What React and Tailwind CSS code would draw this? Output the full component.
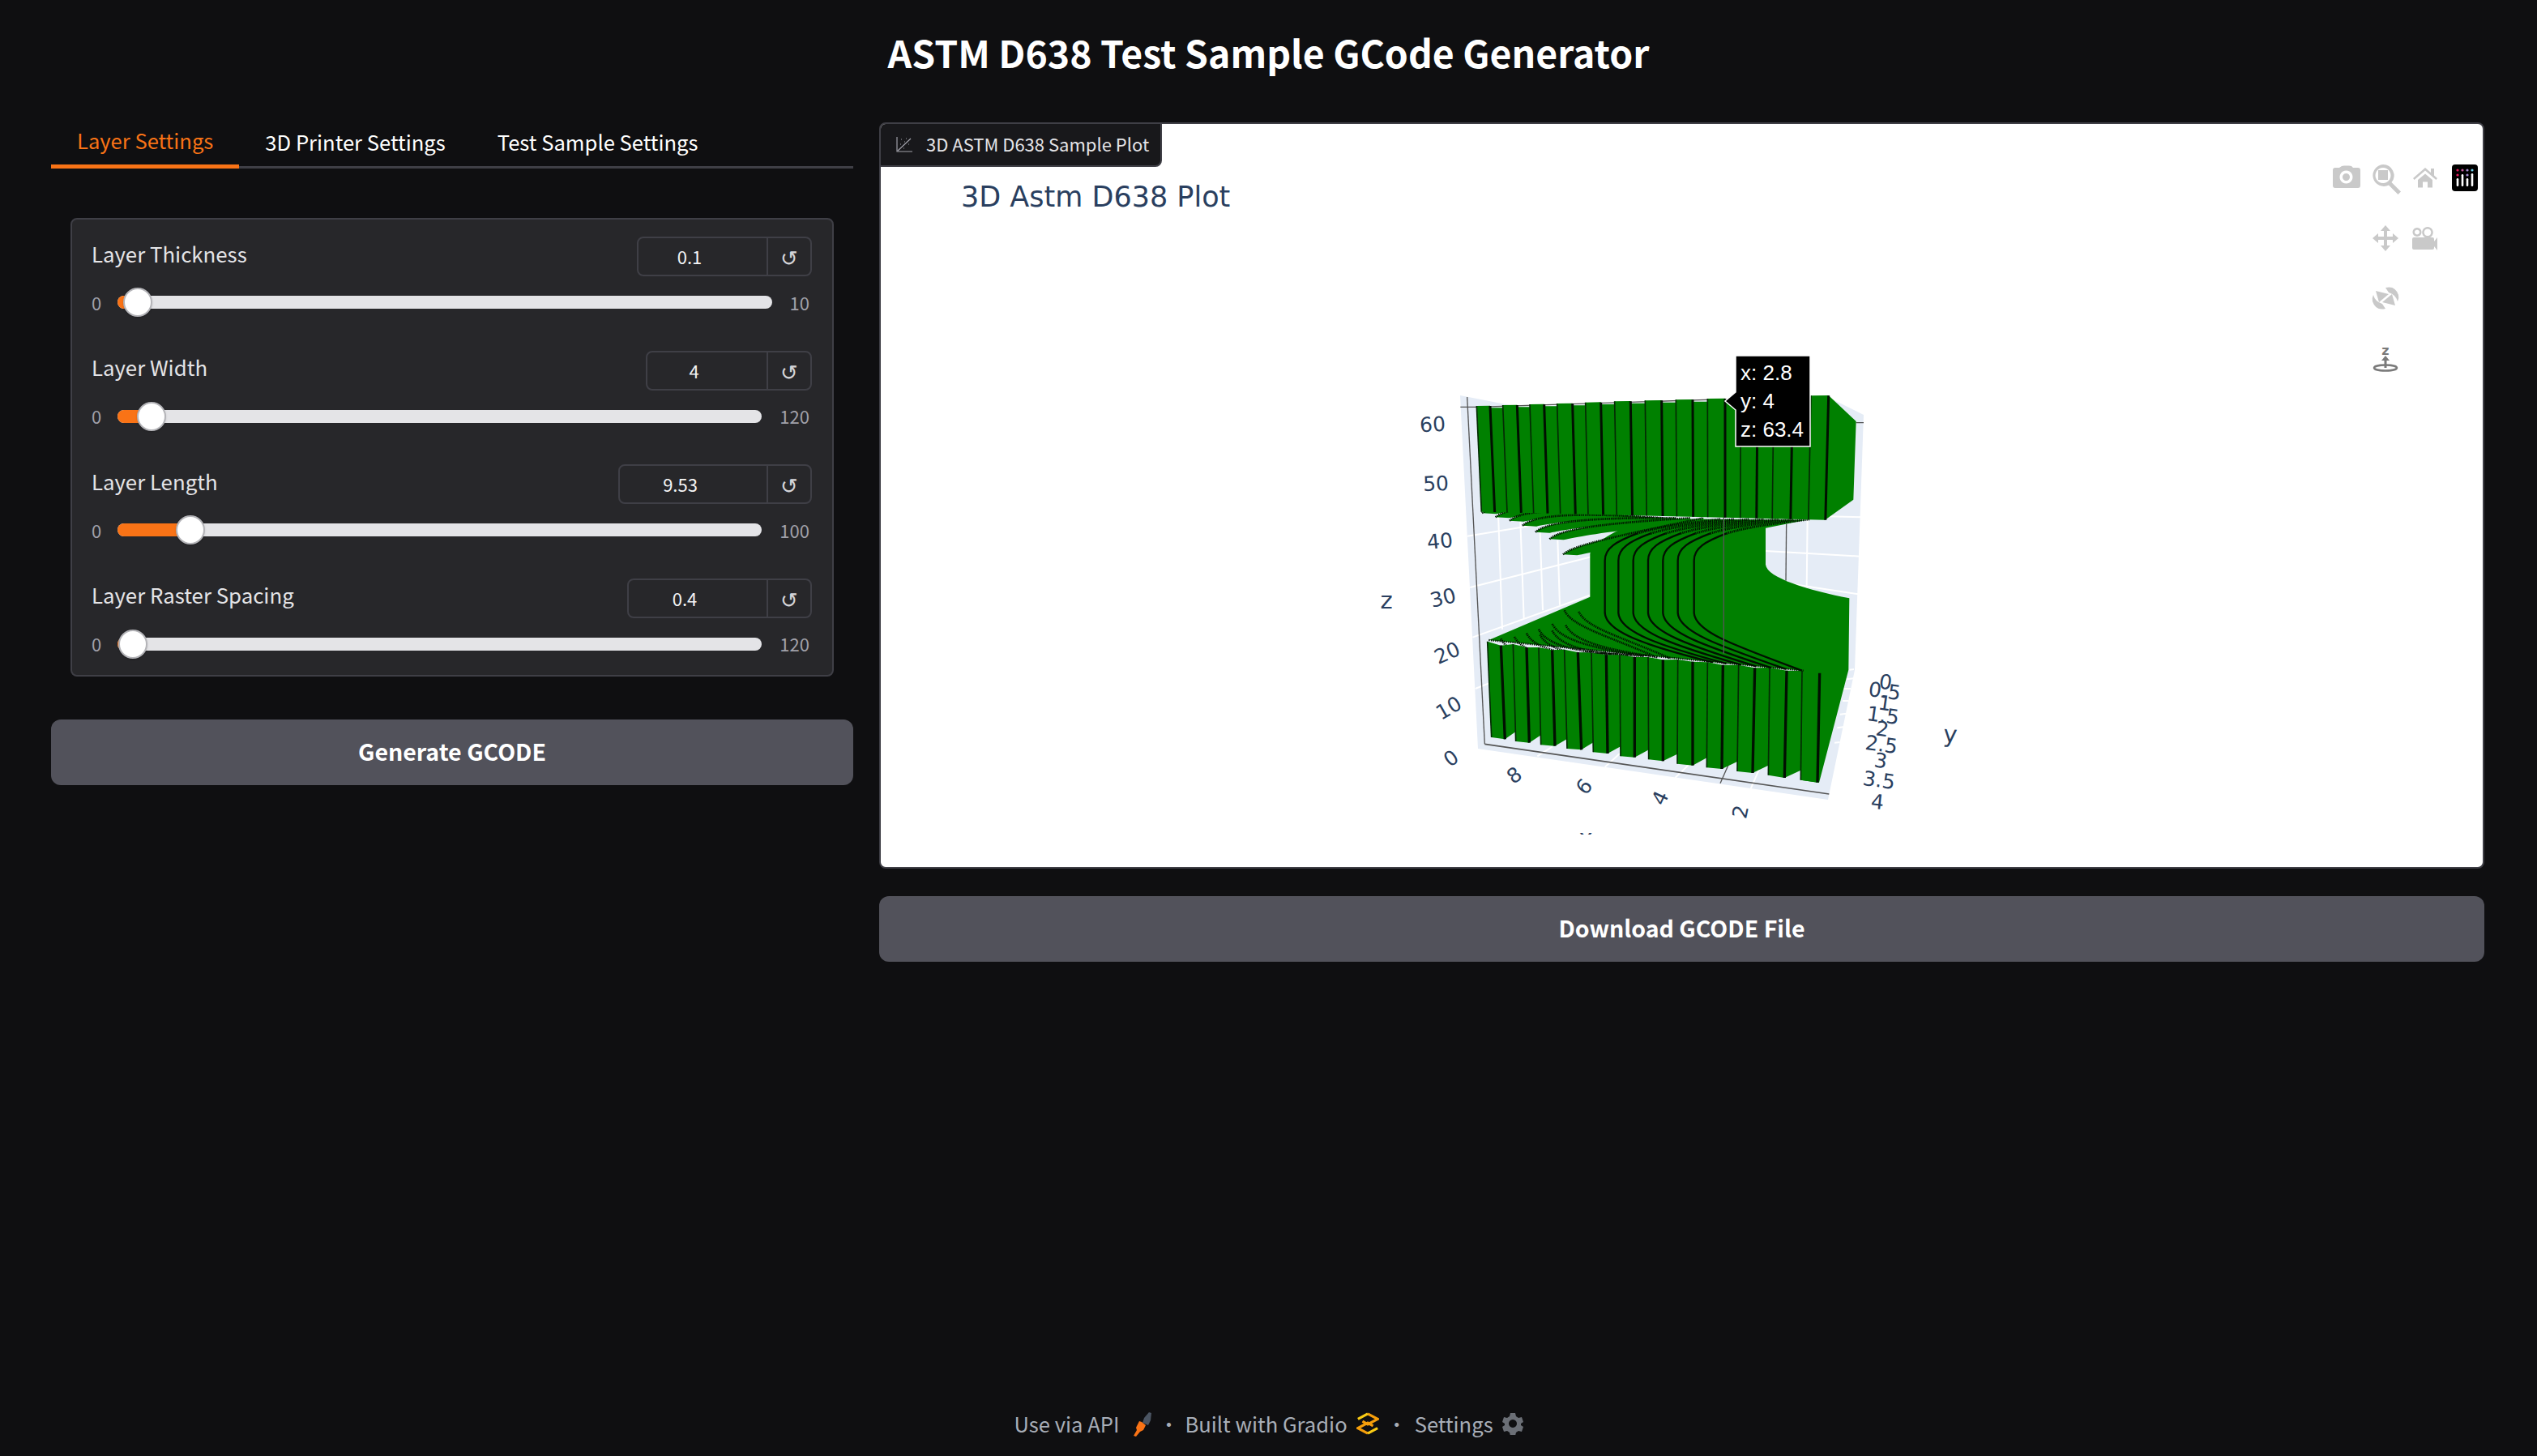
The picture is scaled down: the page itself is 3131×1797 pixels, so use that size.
const sans = "font-['Noto_Sans_CJK_SC','Noto_Sans',sans-serif]";

const sliders = [
  { label: "Layer Thickness", value: "0.1", boxW: "w-[216px]", max: "10", thumb: 24 },
  { label: "Layer Width", value: "4", boxW: "w-[205px]", max: "120", thumb: 41 },
  { label: "Layer Length", value: "9.53", boxW: "w-[239px]", max: "100", thumb: 89 },
  { label: "Layer Raster Spacing", value: "0.4", boxW: "w-[228px]", max: "120", thumb: 18 },
];

const topA = [100, 197, 297, 398, 503, 611, 724, 838, 955, 1078, 1200, 1338];
const topAy = [93, 90, 87, 84, 80, 76, 73, 70, 66, 63, 60, 55];
const topB = [150, 250, 350, 455, 560, 670, 785, 900, 1020, 1140, 1270, 1403];
const topBottomX = (x) => (x < 1020 ? x + 18 * (1 - (x - 100) / 900) : x - (x - 1020) * 0.03);
const topBottomY = (x) => 485 + ((x - 118) * 30) / 1272;

const tips = [
  [120, 490],
  [170, 505],
  [222, 518],
  [270, 536],
  [318, 560],
  [370, 586],
  [420, 643],
];
const neckX = [575, 625, 680, 735, 790, 845, 905];
const ridgeStarts = [
  [425, 850],
  [478, 855],
  [380, 900],
  [430, 905],
  [330, 920],
  [380, 925],
  [285, 935],
  [335, 940],
  [240, 948],
  [190, 955],
];
const edgeY = (x) => 965 + ((x - 140) * 108) / 1165;

const lowerA = [140, 235, 330, 425, 525, 630, 735, 845, 955, 1070, 1185, 1305];
const lowerAy = [965, 975, 987, 995, 1007, 1015, 1023, 1032, 1042, 1052, 1062, 1073];
const lowerB = [190, 285, 380, 475, 580, 685, 790, 900, 1012, 1130, 1248, 1370];
const lowerBy = [980, 987, 997, 1005, 1015, 1023, 1033, 1040, 1052, 1063, 1073, 1082];
const feet = [
  [155, 1320, 205, 1327],
  [245, 1335, 295, 1340],
  [338, 1348, 390, 1352],
  [435, 1362, 488, 1366],
  [532, 1375, 585, 1380],
  [633, 1390, 685, 1394],
  [737, 1402, 790, 1408],
  [843, 1418, 900, 1424],
  [952, 1432, 1008, 1437],
  [1065, 1446, 1122, 1452],
  [1180, 1460, 1240, 1470],
  [1300, 1478, 1362, 1487],
];

const ticks = [
  ["60", 1769, 524, -3],
  ["50", 1773, 597, -2],
  ["40", 1778, 668, -6],
  ["30", 1782, 738, -14],
  ["20", 1787, 806, -24],
  ["10", 1789, 874, -30],
  ["0", 1792, 936, -35],
  ["8", 1870, 957, -35],
  ["6", 1956, 971, -50],
  ["4", 2050, 985, -65],
  ["2", 2149, 1002, -78],
  ["0", 2328, 842, 8],
  ["0.5", 2327, 853, 8],
  ["1", 2327, 868, 8],
  ["1.5", 2325, 883, 8],
  ["2", 2324, 900, 8],
  ["2.5", 2323, 919, 8],
  ["3", 2322, 939, 8],
  ["3.5", 2320, 963, 8],
  ["4", 2318, 990, 6],
];

const axisTitles = [
  ["x", 1958, 1034, 0],
  ["z", 1712, 741, 0],
  ["y", 2408, 906, 4],
];

const Walls = () => (
  <g>
    <polygon
      points="39,54 250,95 1400,60 1533,126 1500,1071 1401,1551 105,1362"
      fill="#e5ecf6"
    />
    <g stroke="#ffffff" strokeWidth="6" fill="none">
      <path d="M66,575 L430,515 M76,765 L530,650 M85,950 L530,790 M95,1140 L145,1120" />
      <path d="M180,490 L195,920 M262,520 L275,880 M335,560 L345,850 M400,590 L408,830" />
      <path d="M1170,630 L1520,650 M1320,500 L1525,505 M1250,750 L1512,790 M1325,510 L1322,770" />
      <path d="M1480,1070 L1497,1068 M1470,1105 L1495,1102 M1460,1140 L1485,1140 M1455,1185 L1478,1185 M1445,1235 L1470,1232 M1435,1285 L1458,1282 M1425,1340 L1445,1338" />
      <path d="M325,1390 L380,1355 M575,1430 L630,1380 M835,1470 L950,1360 M1115,1510 L1180,1360" />
    </g>
    <g stroke="#555555" strokeWidth="4" fill="none">
      <path d="M65,60 L130,1345" />
      <path d="M40,97 L100,97 L1020,68 M1505,155 L1533,155" />
      <path d="M130,1345 L1405,1530" strokeWidth="5" />
      <path d="M1247,530 L1245,740" />
      <path d="M1060,1360 L1002,1490" />
    </g>
  </g>
);

const TopFins = () => {
  let pts = "";
  topA.forEach((a, i) => {
    pts += `${a},${topAy[i]} ${topB[i]},${topAy[i] - 1} `;
    if (i < topA.length - 1) pts += `${topB[i] + 2},${topAy[i] + 7} ${topA[i + 1]},${topAy[i] + 7} `;
  });
  pts += "1505,150 1495,440 1390,515 118,485";
  return (
    <g>
      <polygon points={pts} fill="#008000" />
      {topA.map((a, i) => (
        <line key={a} x1={a} y1={topAy[i]} x2={topBottomX(a)} y2={topBottomY(topBottomX(a))} stroke="#042a04" strokeWidth="5" />
      ))}
      {topB.map((b, i) => (
        <line key={b} x1={b} y1={topAy[i]} x2={topBottomX(b)} y2={topBottomY(topBottomX(b))} stroke="#011001" strokeWidth="9" />
      ))}
    </g>
  );
};

const Slivers = () => (
  <g>
    {tips.map(([x, y]) => {
      const ex = x + 520;
      const ey = 508;
      const top = `M${x},${y} C${x + 35},${y - 30} ${x + 130},${y - 55} ${ex},${ey}`;
      return (
        <g key={x}>
          <path
            d={`${top} L${ex},${ey + 22} C${x + 200},${y - 30} ${x + 110},${y - 8} ${x + 52},${y + 3} Z`}
            fill="#008000"
          />
          <path d={top} fill="none" stroke="#011001" strokeWidth="8" strokeDasharray="4 3" />
        </g>
      );
    })}
  </g>
);

const Body = () => (
  <g>
    {/* neck plus the wide lower tab */}
    <path
      d="M145,960 L520,800 L520,640 C535,590 640,545 720,510 L1320,515 L1170,545 L1170,680 C1175,730 1330,775 1480,805 L1477,1070 L1368,1488 L1300,1478 L1305,1073 Z"
      fill="#008000"
    />
    <Slivers />
    {neckX.map((nx) => {
      const bx = nx + 400;
      const turn = `${nx + 120},565`;
      return (
        <g key={nx}>
          <path
            d={`M${turn} C${nx + 40},595 ${nx},620 ${nx},665 L${nx},860 C${nx + 5},930 ${nx + 150},980 ${bx},${edgeY(bx)}`}
            fill="none"
            stroke="#011001"
            strokeWidth="7"
          />
          <path
            d={`M${turn} C${nx + 220},535 ${nx + 330},525 ${nx + 430},512`}
            fill="none"
            stroke="#011001"
            strokeWidth="9"
            strokeDasharray="4 3"
          />
        </g>
      );
    })}
    {ridgeStarts.map(([x, y]) => {
      const ex = x + 340;
      return (
        <path
          key={x + y}
          d={`M${x},${y} C${x + 30},${y + 60} ${x + 150},${y + 90} ${ex},${edgeY(ex)}`}
          fill="none"
          stroke="#011001"
          strokeWidth="8"
          strokeDasharray="4 3"
        />
      );
    })}
    {lowerA.map((a, i) => {
      const [ax, ay, bx, by] = feet[i];
      const next = feet[i + 1];
      return (
        <g key={a}>
          <polygon points={`${a},${lowerAy[i]} ${lowerB[i]},${lowerBy[i]} ${bx},${by} ${ax},${ay}`} fill="#008000" />
          {next && (
            <polygon
              points={`${lowerB[i]},${lowerBy[i]} ${lowerA[i + 1]},${lowerAy[i + 1]} ${next[0]},${next[1] - 36} ${bx},${by}`}
              fill="#008000"
            />
          )}
          <line x1={a} y1={lowerAy[i]} x2={ax} y2={ay} stroke="#042a04" strokeWidth="5" />
          <line x1={lowerB[i]} y1={lowerBy[i]} x2={bx} y2={by} stroke="#011001" strokeWidth="10" />
        </g>
      );
    })}
    <path d="M145,960 L1310,1073" fill="none" stroke="#011001" strokeWidth="7" strokeDasharray="4 4" />
    <path d="M1015,505 L1015,1010" stroke="#555555" strokeWidth="4" fill="none" />
  </g>
);

const Tooltip = () => (
  <g>
    <path d="M2143,439 L2235,439 L2235,551 L2143,551 L2143,506 L2130,495 L2143,484 Z" fill="#000000" stroke="#ffffff" strokeWidth="1.5" />
    <g fill="#ffffff" fontSize="26" fontFamily="'Liberation Sans', Arial, sans-serif">
      <text x="2149" y="469">x: 2.8</text>
      <text x="2149" y="504">y: 4</text>
      <text x="2149" y="539">z: 63.4</text>
    </g>
  </g>
);

const Orbit = () => (
  <g>
    <path d="M2945,355 Q2957,352 2961,364 Q2962,368 2960,372 Q2958,364 2949,361 Z" />
    <polygon points="2933,359 2949,363 2937,373" />
  </g>
);

const Modebar = () => (
  <g fill="#c9c9c9">
    {/* camera */}
    <path
      fillRule="evenodd"
      d="M2883,207 h5 l3,-2 q1,-0.6 3,-0.6 h6 q2,0 3,0.6 l2,2 h6 q3,0 3,3 v19 q0,3 -3,3 h-28 q-3,0 -3,-3 v-19 q0,-3 3,-3 Z M2896.5,210.5 a8,8 0 1,0 0.01,0 Z M2896.5,214 a4.5,4.5 0 1,1 -0.01,0 Z"
    />
    {/* zoom */}
    <path
      fillRule="evenodd"
      d="M2942,203 a13.5,13.5 0 0 1 10.5,22 l11.5,11.5 l-3.5,3.5 l-11.5,-11.5 a13.5,13.5 0 1 1 -7,-25.5 Z M2942,207 a9.5,9.5 0 1 0 0.01,0 Z"
    />
    <rect x="2936" y="210" width="12" height="12" />
    {/* home */}
    <path d="M2994,207 l7,6 v-5 h4 v8.5 l4,3.5 l-1.6,2 l-13.4,-11.5 l-13.4,11.5 l-1.6,-2 Z M2985,222 l9,-7.5 l9,7.5 v9.5 h-6 v-7 h-6 v7 h-6 Z" />
    {/* plotly logo */}
    <rect x="3027" y="203" width="32" height="33" rx="4" fill="#000000" />
    <g fill="#e5195e">
      <circle cx="3034" cy="210" r="1.6" />
      <circle cx="3034" cy="216" r="1.6" />
    </g>
    <circle cx="3040" cy="210" r="1.6" fill="#c45a9a" />
    <circle cx="3046" cy="210" r="1.6" fill="#a58bd0" />
    <circle cx="3046" cy="216" r="1.6" fill="#a58bd0" />
    <circle cx="3052" cy="210" r="1.6" fill="#6dd3ef" />
    <g fill="#ffffff">
      <rect x="3032.7" y="220" width="2.6" height="10" rx="1.3" />
      <rect x="3038.7" y="215" width="2.6" height="15" rx="1.3" />
      <rect x="3044.7" y="220" width="2.6" height="10" rx="1.3" />
      <rect x="3050.7" y="214" width="2.6" height="16" rx="1.3" />
    </g>
    {/* pan */}
    <path d="M2945,278 l6,7 h-4 v7 h7 v-4 l7,6 l-7,6 v-4 h-7 v7 h4 l-6,7 l-6,-7 h4 v-7 h-7 v4 l-7,-6 l7,-6 v4 h7 v-7 h-4 Z" />
    {/* video camera */}
    <path
      fillRule="evenodd"
      d="M2984,281 a5.5,5.5 0 1,1 -0.01,0 Z M2984,283.5 a3,3 0 1,0 0.01,0 Z M2997,280 a6.8,6.8 0 1,1 -0.01,0 Z M2997,282.5 a4.3,4.3 0 1,0 0.01,0 Z"
    />
    <path d="M2981,293 h23 q2,0 2,2 v3 l4,-5 h0 v16 l-4,-5 v2 q0,2 -2,2 h-23 q-2,0 -2,-2 v-11 q0,-2 2,-2 Z" transform="translate(-1 0)" />
    {/* orbit */}
    <Orbit />
    <g transform="rotate(180 2945 368)">
      <Orbit />
    </g>
    {/* turntable */}
    <text x="2945" y="438" fontSize="16" fontWeight="700" fill="#7a7a7a" textAnchor="middle" fontFamily="'DejaVu Sans', sans-serif">z</text>
    <g fill="none" stroke="#7a7a7a" strokeWidth="2.5">
      <ellipse cx="2945" cy="454" rx="14" ry="3.5" />
      <path d="M2945,454 V444" strokeWidth="3" />
    </g>
    <path d="M2945,439 l5,6 h-10 Z" fill="#7a7a7a" />
  </g>
);

const Plot = () => (
  <svg viewBox="1088 153 1976 917" className="block w-[1976px] h-[917px]">
    <defs>
      <clipPath id="plot-clip">
        <rect x="1088" y="153" width="1976" height="877" />
      </clipPath>
    </defs>
    <text x="1187" y="255" fontSize="35" fill="#2a3f5f" fontFamily="'DejaVu Sans', sans-serif">
      3D Astm D638 Plot
    </text>
    <g clipPath="url(#plot-clip)">
      <g transform="translate(1790 470) scale(0.33333)">
        <Walls />
        <Body />
        <TopFins />
      </g>
      <g fill="#2a3f5f" fontFamily="'DejaVu Sans', sans-serif" textAnchor="middle" dominantBaseline="central">
        <g fontSize="25">
          {ticks.map(([t, x, y, r]) => (
            <text key={`${t}${x}`} x={x} y={y} transform={`rotate(${r} ${x} ${y})`}>
              {t}
            </text>
          ))}
        </g>
        <g fontSize="29">
          {axisTitles.map(([t, x, y, r]) => (
            <text key={t} x={x} y={y} transform={`rotate(${r} ${x} ${y})`}>
              {t}
            </text>
          ))}
        </g>
      </g>
    </g>
    <Tooltip />
    <Modebar />
  </svg>
);

const SliderRow = ({ label, value, boxW, max, thumb }) => (
  <div className="flex flex-col">
    <div className="flex items-center justify-between h-[49px] pr-[1px]">
      <span className="text-[25.8px] leading-none text-[#e4e4e7] -mt-[8px]">{label}</span>
      <div className={`flex h-[49px] ${boxW} border-2 border-[#3f3f46] rounded-[8px]`}>
        <span className="flex-1 flex items-center justify-center pr-[32px] text-[22px] text-[#f4f4f5] border-r-2 border-[#3f3f46]">
          {value}
        </span>
        <span className="w-[52px] flex items-center justify-center text-[26px] text-[#d4d4d8]">↺</span>
      </div>
    </div>
    <div className="flex items-center mt-[14px] h-[36px] pr-[4px] gap-[22px] text-[22px] text-[#a1a1aa]">
      <span className="w-[10px]">0</span>
      <div className="relative flex-1 h-[16px] rounded-full bg-[#e4e4e7]">
        <div className="absolute left-0 top-0 h-full rounded-l-full bg-[#f97316]" style={{ width: thumb + 4 }} />
        <div
          className="absolute top-[-10px] w-[36px] h-[36px] rounded-full bg-white border-2 border-[#b4b4b8] shadow"
          style={{ left: thumb - 17 }}
        />
      </div>
      <span>{max}</span>
    </div>
  </div>
);

export default function App() {
  return (
    <div className={`${sans} flex flex-col h-[1797px] bg-[#0f0f11] text-white overflow-hidden`}>
      <h1 className="h-[127px] mb-[24px] flex items-center justify-center text-[46.4px] font-semibold">
        ASTM D638 Test Sample GCode Generator
      </h1>
      <div className="flex gap-[33px] pl-[63px]">
        <div className="w-[990px] flex flex-col">
          <div className="flex h-[57px] border-b-[3px] border-[#3f3f46] text-[25.6px]">
            <div className="px-[32px] h-[57px] pb-[8px] flex items-center text-[#f97316] border-b-[5px] border-[#f97316]">
              Layer Settings
            </div>
            <div className="px-[32px] h-[48px] flex items-center">3D Printer Settings</div>
            <div className="px-[32px] h-[48px] flex items-center">Test Sample Settings</div>
          </div>
          <div className="mx-[24px] mt-[61px] flex flex-col gap-[41.5px] bg-[#27272a] border-2 border-[#3f3f46] rounded-[8px] px-[24px] pt-[21px] pb-[20px]">
            {sliders.map((s) => (
              <SliderRow key={s.label} {...s} />
            ))}
          </div>
          <button className="mt-[53px] h-[81px] pb-[2px] rounded-[12px] bg-[#52525b] text-[28.5px] font-semibold">
            Generate GCODE
          </button>
        </div>
        <div className="w-[1981px] -ml-[1px] flex flex-col">
          <div className="relative h-[921px] border-2 border-[#3f3f46] rounded-[8px] bg-white overflow-hidden">
            <Plot />
            <div className="absolute -left-[2px] -top-[2px] h-[55px] w-[349px] flex items-center gap-[17px] pl-[19px] pb-[2px] bg-[#18181b] border-2 border-[#3f3f46] rounded-br-[8px] text-[22px] text-[#e4e4e7] whitespace-nowrap">
              <svg width="20" height="20" viewBox="0 0 20 20" fill="none" stroke="#a1a1aa" strokeWidth="1.2">
                <path d="M1,1 V19 H20 M2,18 L18,3" />
                <path d="M6,4 h.5 M12,3 h.5 M5,10 h.5 M10,7 h.5 M9,15 h.5 M15,10 h.5" strokeWidth="2" />
              </svg>
              <span>3D ASTM D638 Sample Plot</span>
            </div>
          </div>
          <button className="mt-[34px] h-[81px] pb-[2px] rounded-[12px] bg-[#52525b] text-[28.5px] font-semibold">
            Download GCODE File
          </button>
        </div>
      </div>
      <footer className="mt-auto mb-[23px] h-[34px] flex items-center justify-center text-[25.6px] text-[#a8aeb8]">
        <span>Use via API</span>
        <svg className="ml-[17px]" width="24" height="32" viewBox="0 0 24 32">
          <path d="M14,9 l6,-7 l3,1 l-1,9 l-3,6 l-7,-3 Z" fill="#4b5563" />
          <path d="M1,31 l4,-7 l-1,-3 l4,-8 l3,1 l5,4 l-3,6 l-4,2 l-5,6 Z" fill="#f97316" />
        </svg>
        <span className="mx-[8px] text-[24px]">·</span>
        <span>Built with Gradio</span>
        <svg className="ml-[11px]" width="28" height="28" viewBox="0 0 30 30" fill="none" strokeWidth="3.5">
          <path d="M15,2 L28,9 L15,16 L8,12 M15,28 L2,21 L15,14 L22,18" stroke="#f59e0b" />
          <path d="M2,9 L15,2 M28,21 L15,28" stroke="#facc15" />
        </svg>
        <span className="mx-[10px] text-[24px]">·</span>
        <span>Settings</span>
        <svg className="ml-[11px]" width="26" height="28" viewBox="0 0 26 28" fill="#6b6f76">
          <path
            fillRule="evenodd"
            d="M10,1 h6 l1,4 l3,2 l4,-1 l2,6 l-3,2 v2 l3,2 l-2,6 l-4,-1 l-3,2 l-1,4 h-6 l-1,-4 l-3,-2 l-4,1 l-2,-6 l3,-2 v-2 l-3,-2 l2,-6 l4,1 l3,-2 Z M13,9 a5,5 0 1,0 0.01,0 Z"
          />
        </svg>
      </footer>
    </div>
  );
}
